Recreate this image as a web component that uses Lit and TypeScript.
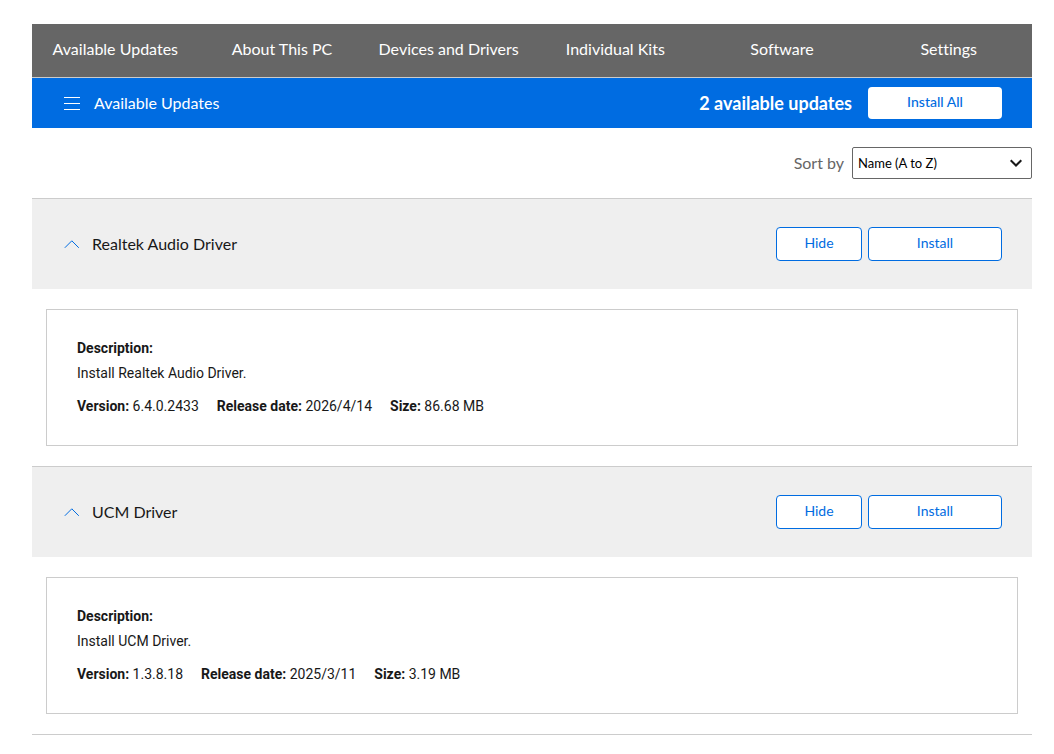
import { LitElement, html, css, nothing } from "lit";
import { customElement, property, state } from "lit/decorators.js";
import { classMap } from "lit/directives/class-map.js";

interface Driver {
  name: string;
  description: string;
  version: string;
  releaseDate: string;
  size: string;
}

const TABS = [
  "Available Updates",
  "About This PC",
  "Devices and Drivers",
  "Individual Kits",
  "Software",
  "Settings",
];

const DRIVERS: Driver[] = [
  {
    name: "Realtek Audio Driver",
    description: "Install Realtek Audio Driver.",
    version: "6.4.0.2433",
    releaseDate: "2026/4/14",
    size: "86.68 MB",
  },
  {
    name: "UCM Driver",
    description: "Install UCM Driver.",
    version: "1.3.8.18",
    releaseDate: "2025/3/11",
    size: "3.19 MB",
  },
];

/** A single update: a grey header row and a details card that folds away */
@customElement("driver-item")
export class DriverItem extends LitElement {
  @property({ attribute: false })
  driver!: Driver;

  @state()
  protected open = true;

  static styles = css`
    :host {
      display: block;
      border-top: 1px solid #ccc;
    }

    .row {
      display: flex;
      align-items: center;
      justify-content: space-between;
      padding: 28px 30px;
      background: #efefef;
    }

    .name {
      margin: 0;
      font: inherit;
    }

    .toggle {
      display: flex;
      align-items: center;
      gap: 10px;
      padding: 0;
      border: 0;
      background: none;
      color: #181818;
      font: inherit;
      cursor: pointer;
    }

    .chevron {
      width: 20px;
      height: 20px;
      fill: none;
      stroke: #006ce1;
    }

    .chevron.closed {
      transform: rotate(180deg);
    }

    .actions {
      display: flex;
      gap: 6px;
    }

    .action {
      width: 134px;
      height: 34px;
      padding: 0 0 2px;
      border: 1px solid #006ce1;
      border-radius: 4px;
      background: #fff;
      color: #006ce1;
      font: inherit;
      font-size: 14px;
      cursor: pointer;
    }

    .action.small {
      width: 86px;
    }

    .card {
      margin: 20px 14px;
      padding: 26px 30px;
      border: 1px solid #ccc;
      font: 14px/25px Roboto, sans-serif;
    }

    .card p {
      margin: 0;
    }

    .card b {
      font-weight: 700;
    }

    .card .facts {
      display: flex;
      gap: 18px;
      margin-top: 8px;
    }
  `;

  render() {
    const { name, description, version, releaseDate, size } = this.driver;

    return html`
      <div class="row">
        <h2 class="name">
          <button
            class="toggle"
            aria-expanded="${this.open}"
            @click="${() => (this.open = !this.open)}"
          >
            <svg
              class="chevron ${classMap({ closed: !this.open })}"
              viewBox="0 0 20 20"
              aria-hidden="true"
            >
              <path d="M2.8 13.8 9.8 6.8 16.8 13.8" />
            </svg>
            ${name}
          </button>
        </h2>
        <div class="actions">
          <button class="action small">Hide</button>
          <button class="action">Install</button>
        </div>
      </div>
      ${this.open
        ? html`<div class="card">
            <p><b>Description:</b></p>
            <p>${description}</p>
            <p class="facts">
              <span><b>Version:</b> ${version}</span>
              <span><b>Release date:</b> ${releaseDate}</span>
              <span><b>Size:</b> ${size}</span>
            </p>
          </div>`
        : nothing}
    `;
  }
}

@customElement("app-root")
export class AppRoot extends LitElement {
  @state()
  protected descending = false;

  _onSort(e) {
    this.descending = e.target.value === "desc";
  }

  static styles = css`
    :host {
      display: block;
      padding: 24px 22px 0 32px;
      background: #fff;
      color: #181818;
      font: 16px/24px Lato, sans-serif;
      font-variant-ligatures: none;
    }

    .tabs {
      display: grid;
      grid-template-columns: repeat(6, 1fr);
      border-bottom: 1px solid #ccc;
      background: #666;
    }

    .tab {
      padding: 13px 0 16px;
      color: #fff;
      text-align: center;
      text-decoration: none;
    }

    .bar {
      display: flex;
      align-items: center;
      gap: 16px;
      height: 50px;
      padding: 0 30px;
      background: #006ce1;
      color: #fff;
    }

    .menu {
      display: flex;
      align-items: center;
      gap: 12px;
      margin-right: auto;
      padding: 0;
      border: 0;
      background: none;
      color: inherit;
      font: inherit;
      cursor: pointer;
    }

    .menu-icon {
      width: 20px;
      height: 20px;
      fill: none;
      stroke: #fff;
    }

    .count {
      font-size: 18px;
      font-weight: 700;
    }

    .install-all {
      width: 134px;
      height: 32px;
      padding: 0 0 2px;
      border: 0;
      border-radius: 4px;
      background: #fff;
      color: #006ce1;
      font: inherit;
      font-size: 14px;
      font-weight: 500;
      cursor: pointer;
    }

    .sort {
      display: flex;
      align-items: center;
      justify-content: flex-end;
      gap: 8px;
      padding: 19px 0;
      color: #666;
    }

    .select-box {
      display: grid;
      align-items: center;
      width: 180px;
    }

    .select-box > * {
      grid-area: 1 / 1;
    }

    .select {
      appearance: none;
      width: 100%;
      height: 32px;
      padding: 0 30px 0 5px;
      border: 1px solid #666;
      border-radius: 2px;
      background: #fff;
      color: #000;
      font: inherit;
      font-size: 13px;
    }

    .arrow {
      justify-self: end;
      width: 12px;
      height: 8px;
      margin-right: 10px;
      fill: none;
      stroke: #181818;
      stroke-width: 2;
      pointer-events: none;
    }

    .list {
      border-bottom: 1px solid #ccc;
    }
  `;

  render() {
    const drivers = this.descending ? [...DRIVERS].reverse() : DRIVERS;

    return html`
      <nav class="tabs">
        ${TABS.map((tab) => html`<a class="tab" href="#">${tab}</a>`)}
      </nav>
      <header class="bar">
        <button class="menu">
          <svg class="menu-icon" viewBox="0 0 20 20" aria-hidden="true">
            <path d="M2 4.5H18M2 10.5H18M2 16.5H18" />
          </svg>
          Available Updates
        </button>
        <span class="count">${drivers.length} available updates</span>
        <button class="install-all">Install All</button>
      </header>
      <div class="sort">
        <label for="sort">Sort by</label>
        <div class="select-box">
          <select class="select" id="sort" @change="${this._onSort}">
            <option value="asc">Name (A to Z)</option>
            <option value="desc">Name (Z to A)</option>
          </select>
          <svg class="arrow" viewBox="0 0 12 8" aria-hidden="true">
            <path d="M0.7 1.2 6 6.5 11.3 1.2" />
          </svg>
        </div>
      </div>
      <main class="list">
        ${drivers.map(
          (driver) => html`<driver-item .driver="${driver}"></driver-item>`,
        )}
      </main>
    `;
  }
}
